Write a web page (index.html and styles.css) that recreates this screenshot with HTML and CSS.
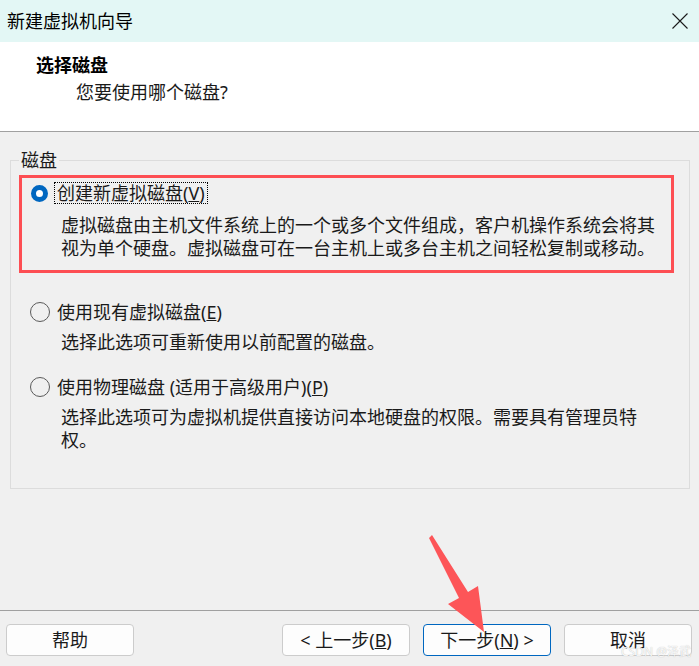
FILE: index.html
```html
<!DOCTYPE html>
<html lang="zh-CN">
<head>
<meta charset="utf-8">
<title>新建虚拟机向导</title>
<link rel="stylesheet" href="styles.css">
</head>
<body>
<div class="window">
  <div class="titlebar">
    <span class="title">新建虚拟机向导</span>
    <svg class="close" width="16" height="16" viewBox="0 0 16 16"><path d="M0.5 0.5 L15.5 15.5 M15.5 0.5 L0.5 15.5" stroke="#1a1a1a" stroke-width="1.1" fill="none"/></svg>
  </div>
  <div class="header">
    <div class="h-title">选择磁盘</div>
    <div class="h-sub">您要使用哪个磁盘?</div>
  </div>
  <div class="content">
    <fieldset class="group">
      <legend>磁盘</legend>
      <div class="option first highlight">
        <div class="opt-row"><span class="radio checked"></span><span class="label focus">创建新虚拟磁盘(<u>V</u>)</span></div>
        <p class="desc">虚拟磁盘由主机文件系统上的一个或多个文件组成，客户机操作系统会将其视为单个硬盘。虚拟磁盘可在一台主机上或多台主机之间轻松复制或移动。</p>
      </div>
      <div class="option second">
        <div class="opt-row"><span class="radio"></span><span class="label">使用现有虚拟磁盘(<u>E</u>)</span></div>
        <p class="desc">选择此选项可重新使用以前配置的磁盘。</p>
      </div>
      <div class="option third">
        <div class="opt-row"><span class="radio"></span><span class="label">使用物理磁盘 (适用于高级用户)(<u>P</u>)</span></div>
        <p class="desc">选择此选项可为虚拟机提供直接访问本地硬盘的权限。需要具有管理员特权。</p>
      </div>
    </fieldset>
  </div>
  <div class="footer">
    <button class="btn">帮助</button>
    <button class="btn back">&lt; 上一步(<u>B</u>)</button>
    <button class="btn primary">下一步(<u>N</u>) &gt;</button>
    <button class="btn">取消</button>
  </div>
  <svg class="arrow" width="699" height="666" viewBox="0 0 699 666"><polygon points="429,538 432,535 468,592 478,586 484,632 448,604 459,598" fill="#fd5558"/></svg>
  <div class="watermark">CSDN @泽武</div>
</div>
</body>
</html>
```
FILE: styles.css
```css
* { box-sizing: border-box; }
body {
  margin: 0;
  width: 699px;
  height: 666px;
  overflow: hidden;
  font-family: "Noto Sans", "Noto Sans CJK SC", sans-serif;
  font-size: 18px;
  color: #1a1a1a;
  background: #f0f0f0;
}
.window {
  position: relative;
  display: flex;
  flex-direction: column;
  height: 666px;
}
.titlebar {
  height: 42px;
  background: #e3f7f5;
  display: flex;
  align-items: center;
  justify-content: space-between;
  padding: 0 11px 0 7px;
}
.title { font-size: 18px; line-height: 24px; color: #000; }
.close { display: block; }
.header {
  height: 90px;
  background: #fff;
  border-bottom: 1px solid #a0a0a0;
  padding-top: 11px;
}
.h-title {
  padding-left: 36px;
  font-weight: bold;
  line-height: 24px;
  color: #000;
}
.h-sub {
  padding-left: 76px;
  margin-top: 3px;
  line-height: 24px;
}
.content {
  flex: 1;
  padding: 17px 0 0 10px;
}
.group {
  margin: 0;
  width: 680px;
  border: 1px solid #dcdcdc;
  padding: 4px 15px 36px 8px;
}
.group legend {
  padding: 0 2px;
  line-height: 22px;
  font-size: 18px;
}
.highlight {
  border: 3px solid #fd4e53;
  padding: 4px 0 10px 0;
}
.opt-row {
  display: flex;
  align-items: center;
  height: 22px;
}
.radio {
  width: 20px;
  height: 20px;
  border: 1px solid #5a5a5a;
  border-radius: 50%;
  margin-left: 11px;
  margin-right: 7px;
  flex: none;
}
.radio.checked {
  width: 17px;
  height: 17px;
  border: 5px solid #0067c0;
  background: #fff;
  margin-left: 9px;
  margin-right: 6px;
}
.label { line-height: 20px; white-space: nowrap; }
.label.focus {
  border: 1px dotted #000;
  padding: 0 2px 0 2px;
  line-height: 20px;
}
.desc {
  margin: 10px 0 0 0;
  padding-left: 39px;
  max-width: 640px;
  line-height: 23px;
}
.second { margin-top: 28px; }
.third { margin-top: 22px; }
.second .desc, .third .desc {
  margin-top: 8px;
  padding-left: 42px;
  max-width: 643px;
}
.footer {
  height: 56px;
  border-top: 1px solid #a0a0a0;
  padding: 13px 7px 0 6px;
  display: flex;
  gap: 13px;
}
.btn {
  width: 128px;
  height: 32px;
  border: 1px solid #cccccc;
  border-radius: 4px;
  background: #fdfdfd;
  font-family: "Noto Sans", "Noto Sans CJK SC", sans-serif;
  font-size: 18px;
  color: #1a1a1a;
  padding: 0;
  line-height: 28px;
}
.btn.back { margin-left: auto; }
.btn.primary { border-color: #0067c0; }
.arrow {
  position: absolute;
  left: 0;
  top: 0;
  pointer-events: none;
}
.watermark {
  position: absolute;
  right: 8px;
  bottom: 8px;
  font-size: 12px;
  line-height: 12px;
  color: rgba(255, 255, 255, 0.9);
  text-shadow: 0 0 1px rgba(0, 0, 0, 0.3);
  pointer-events: none;
}
```
